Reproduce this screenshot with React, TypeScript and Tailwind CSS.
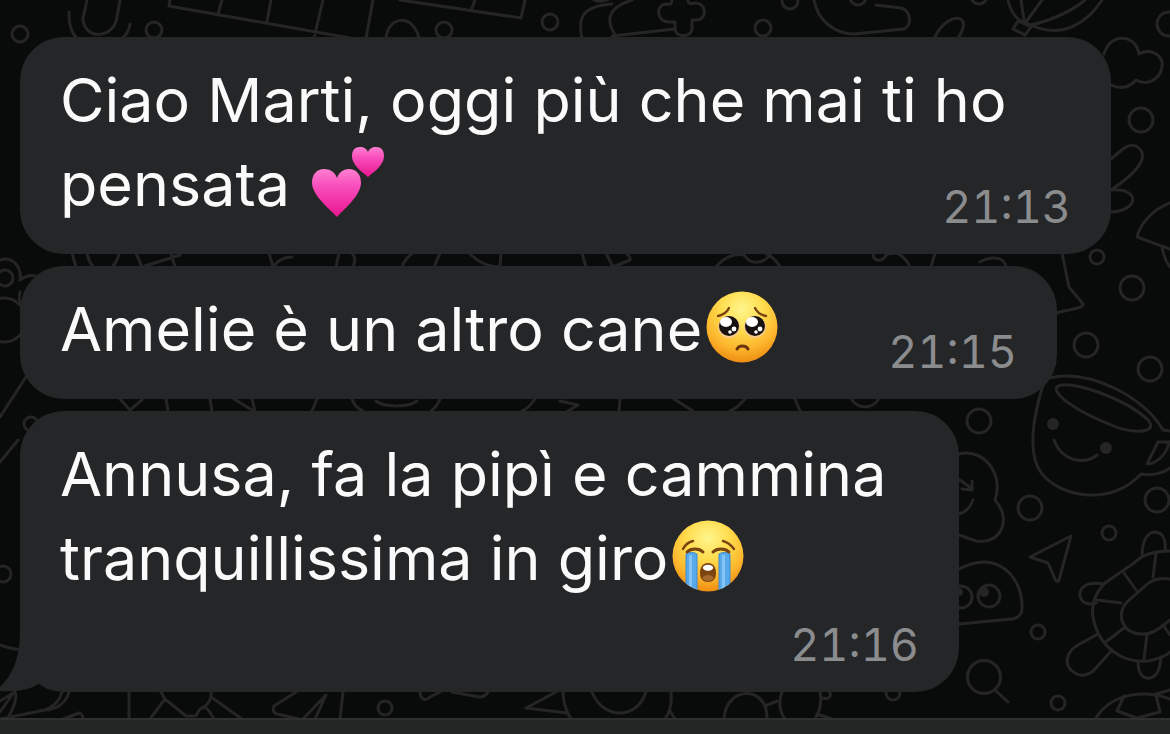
import type { ReactNode } from "react";
import clsx from "clsx";

// ------------------------------------------------------------
// Emoji
// ------------------------------------------------------------

function TwoHearts() {
  return (
    <svg
      role="img"
      aria-label="💕"
      viewBox="0 0 74 72"
      className="inline-block w-[74px] h-[72px] ml-1 align-[-12px]"
    >
      <defs>
        <linearGradient id="heart" x1="0" y1="0" x2="0" y2="1">
          <stop offset="0" stopColor="#ff7fd0" />
          <stop offset="0.35" stopColor="#f94fbd" />
          <stop offset="1" stopColor="#e8168f" />
        </linearGradient>
      </defs>
      <path
        fill="url(#heart)"
        d="M26 71C22 66 1 50 1 37C1 28 6 23 13 23C19 23 24 26 26 32C28 26 33 23 38 23C45 23 50 28 50 37C50 50 30 66 26 71Z"
      />
      <path
        fill="url(#heart)"
        d="M57 31C54 28 41 20 41 10C41 4 44 1 49 1C53 1 56 3 57 6C58 3 61 1 65 1C70 1 73 4 73 10C73 20 60 28 57 31Z"
      />
    </svg>
  );
}

function FaceGradient({ id }: { id: string }) {
  return (
    <defs>
      <radialGradient id={id} cx="0.5" cy="0.25" r="0.75">
        <stop offset="0" stopColor="#fff68e" />
        <stop offset="0.4" stopColor="#ffdc4e" />
        <stop offset="0.75" stopColor="#fcb52c" />
        <stop offset="1" stopColor="#ee8d12" />
      </radialGradient>
    </defs>
  );
}

function PleadingFace() {
  return (
    <svg
      role="img"
      aria-label="🥺"
      viewBox="0 0 72 72"
      className="inline-block w-[72px] h-[72px] ml-1 align-[-12px]"
    >
      <FaceGradient id="pleading" />
      <circle cx="36" cy="36" r="35.5" fill="url(#pleading)" />
      <g fill="none" stroke="#7a4310" strokeWidth="2.4" strokeLinecap="round">
        <path d="M12 25C17 24 21 21 23 17" />
        <path d="M49 17C51 21 55 24 60 25" />
      </g>
      <circle cx="23" cy="36" r="11" fill="#f7c98a" />
      <circle cx="49" cy="36" r="11" fill="#f7c98a" />
      <circle cx="23" cy="35" r="10" fill="#17110f" />
      <circle cx="49" cy="35" r="10" fill="#17110f" />
      <g fill="#fff">
        <ellipse cx="20" cy="31" rx="6" ry="5" />
        <ellipse cx="46" cy="31" rx="6" ry="5" />
        <circle cx="28" cy="38" r="2.4" />
        <circle cx="54" cy="38" r="2.4" />
        <circle cx="24" cy="41" r="1.8" />
        <circle cx="50" cy="41" r="1.8" />
      </g>
      <path
        d="M31 58C33 54 40 54 42 58"
        fill="none"
        stroke="#6b340c"
        strokeWidth="3"
        strokeLinecap="round"
      />
    </svg>
  );
}

function CryingFace() {
  return (
    <svg
      role="img"
      aria-label="😭"
      viewBox="0 0 72 72"
      className="inline-block w-[72px] h-[72px] ml-1 align-[-12px]"
    >
      <FaceGradient id="crying" />
      <clipPath id="face">
        <circle cx="36" cy="36" r="35.5" />
      </clipPath>
      <circle cx="36" cy="36" r="35.5" fill="url(#crying)" />
      <g clipPath="url(#face)">
        <path fill="#58a9ea" stroke="#3c8bd0" d="M14 34C17 32 22 32 25 34V72H14Z" />
        <path fill="#58a9ea" stroke="#3c8bd0" d="M47 34C50 32 55 32 58 34V72H47Z" />
        <path fill="#82c5f5" d="M17 35H20V72H17ZM50 35H53V72H50Z" />
      </g>
      <g fill="none" stroke="#7a4310" strokeLinecap="round">
        <path strokeWidth="2.4" d="M11 29C13 25 17 22 21 21M51 21C55 22 59 25 62 29" />
        <path strokeWidth="3" d="M15 32C19 28 27 28 31 32M41 32C45 28 53 28 57 32" />
      </g>
      <path
        fill="#7c450f"
        d="M36 43C41 43 44 47 44 53C44 59 41 62 36 62C31 62 28 59 28 53C28 47 31 43 36 43Z"
      />
      <path fill="#fff" d="M31 47C33 44 39 44 41 47C42 52 30 52 31 47Z" />
      <path fill="#a86a2c" d="M30 58C33 54 39 54 42 58C39 62 33 62 30 58Z" />
    </svg>
  );
}

// ------------------------------------------------------------
// Chat wallpaper
// ------------------------------------------------------------

const dots = [
  [20, 34, 8], [154, 30, 8], [444, 30, 8], [550, 22, 8], [763, 28, 8],
  [790, 1, 8], [858, -3, 8], [979, -4, 8], [1169, 24, 12], [1141, 120, 12],
  [1097, 257, 7], [1132, 288, 12], [1086, 345, 12], [1150, 369, 12],
  [979, 421, 12], [1030, 508, 12], [1157, 500, 12], [1109, 533, 7],
  [1038, 632, 7], [1058, 703, 7], [385, 708, 7], [31, 424, 7],
  [5, 278, 8], [4, 320, 22], [3, 574, 8], [893, 693, 7],
];

function Wallpaper() {
  return (
    <svg
      aria-hidden="true"
      viewBox="0 0 1170 734"
      preserveAspectRatio="xMinYMin slice"
      className="absolute inset-0 w-full h-full"
    >
      <g
        fill="none"
        stroke="#252525"
        strokeWidth="3"
        strokeLinecap="round"
        strokeLinejoin="round"
      >
        {dots.map(([cx, cy, r]) => (
          <circle key={`${cx}-${cy}`} cx={cx} cy={cy} r={r} />
        ))}
        {/* top row */}
        <path d="M87 0L83 18C83 40 114 40 117 17L120 0M69 12C69 23 70 31 78 40M130 24C129 31 126 36 120 40" />
        <path d="M170 0L169 6L350 38M222 0L218 14M271 0L267 21M323 0L314 38M373 0L366 38M400 0L521 18L525 0M475 0L472 8" />
        <path d="M386 38C388 16 413 13 419 38" />
        <path d="M582 38C578 20 580 6 612 4M616 36C606 22 606 8 632 0M612 36L675 29M594 0C599 2 605 1 609 -1" />
        <path d="M672 0C672 4 670 5 667 4C655 4 656 22 669 22H675V29C676 38 691 38 692 29V20H697C708 19 706 2 695 3C690 4 688 4 688 0" />
        <path d="M814 0C818 22 836 34 854 34L904 29C913 24 910 10 901 8L876 5M935 37C942 22 955 15 962 20C966 25 962 32 958 38" />
        <path d="M1008 0C1010 10 1016 18 1022 22L1031 25C1062 40 1088 22 1102 0M1021 0L1024 20M1042 0L1026 22M1085 0C1070 13 1045 22 1031 25M1018 21L1031 27L1025 35L1013 29Z" />
        {/* right side, upper */}
        <path d="M1104 54C1110 32 1136 34 1139 54C1151 47 1164 56 1162 67C1160 80 1147 86 1136 80C1129 88 1120 89 1111 85" />
        <path d="M1111 159L1123 149C1134 140 1147 150 1141 162C1136 172 1123 182 1111 190M1111 190C1142 188 1138 211 1111 212" />
        <path d="M1170 203C1152 210 1140 224 1137 237L1170 249M1162 246C1163 254 1166 262 1170 267" />
        <path d="M1062 253L1069 287L1083 304C1084 309 1064 310 1057 313" />
        {/* between the bubbles */}
        <path d="M72 253L76 267M87 253C88 260 91 264 93 267M119 253C118 260 115 264 112 267M136 253L142 267M145 266L180 255M171 253L175 267M269 253L273 267C278 260 284 257 292 257" />
        <path d="M339 253L336 267M352 253C356 258 355 262 353 267M413 253C407 257 404 261 402 267M440 253L434 267M470 254C480 264 490 267 500 267M501 253L500 267M582 253L586 267M606 253L613 267L630 260C631 257 628 255 626 253" />
        <path d="M716 267C724 257 735 253 744 255C752 267 765 262 770 255M765 253C773 257 777 261 780 267M873 253C873 262 882 263 887 254L897 253C904 257 908 262 910 267M935 253L931 267M980 262C987 258 1004 254 1006 267" />
        <path d="M120 399L130 410L142 400M166 399L168 411M210 399L212 411M234 399L252 410M252 399L255 411M317 399L312 411M352 399C354 405 358 409 363 411M376 401C385 408 410 407 417 401M440 399C438 404 435 408 431 411M535 399C531 405 527 409 522 411M560 401L578 405L568 411M620 399L619 411M674 399L693 411M745 399C740 405 735 409 730 411M795 399L800 411M852 400C858 409 872 409 878 400" />
        <path d="M0 260C12 256 22 266 20 280C26 276 32 274 38 277M26 377L0 417M20 292C18 300 20 304 24 308" />
        {/* cup */}
        <path d="M1049 378C1090 368 1145 398 1163 430L1170 431M1044 382C1032 420 1027 455 1042 474C1062 498 1112 506 1141 474C1152 476 1164 473 1170 468M1170 442H1158L1147 464C1156 464 1166 455 1169 443" />
        <path d="M1057 387C1066 378 1126 398 1149 421C1158 434 1130 434 1109 424C1078 412 1052 394 1057 387ZM1054 440C1061 460 1083 466 1097 455" />
        {/* cloud and ghost */}
        <path d="M959 454C984 448 1004 474 995 500C1013 520 1000 545 976 541L959 535M960 480L971 488M972 481V490L962 489M973 500C970 508 964 513 958 514" />
        <path d="M959 569C1000 548 1023 580 1022 608C1022 615 1018 618 1012 619L959 624" />
        <circle cx="989" cy="596" r="11" />
        <circle cx="961" cy="597" r="11" />
        {/* paper plane and lens */}
        <path d="M1030 557L1071 536L1059 580C1058 582 1056 582 1055 579L1048 563Z" />
        <circle cx="984" cy="677" r="16.5" />
        <path d="M995 690L1008 702" />
        {/* turtle */}
        <path d="M1170 551C1152 551 1142 555 1134 563L1105 583C1090 598 1090 616 1098 633C1109 655 1130 663 1148 661C1158 659 1166 656 1170 652" />
        <path d="M1170 579C1156 577 1149 582 1145 586L1127 602C1115 615 1123 635 1143 634C1153 634 1160 628 1170 620M1156 553L1153 577M1124 573L1136 590M1097 600L1121 603M1107 641L1124 628M1147 634L1144 659M1163 625L1170 635" />
        <path d="M1142 556C1142 540 1148 532 1155 532C1164 533 1166 540 1165 551M1103 584C1087 581 1079 587 1080 596C1082 604 1089 605 1096 603M1098 634L1078 645C1067 651 1064 663 1071 670C1080 679 1090 675 1096 668L1112 650M1138 661C1138 674 1143 679 1150 678C1158 676 1160 668 1161 657" />
        <path d="M1096 718C1112 692 1146 690 1170 699M1124 696L1117 711L1137 718L1160 712L1156 695M1170 690L1156 694" />
        {/* bottom row */}
        <path d="M0 701L15 692C18 699 12 710 8 718M0 712L12 695M0 719L45 710C55 706 60 700 62 692M48 710C60 708 67 700 69 692M63 719L79 713C83 714 83 717 83 719M129 692V719M161 692L165 699L186 716H196C202 702 207 706 214 719M165 699L150 719M211 692C212 700 208 704 203 708M211 697L242 719M296 692L274 706C272 711 274 713 277 714L299 719M303 719L326 695L315 719M343 692L340 719" />
        <path d="M420 692C421 701 426 701 430 697L440 692M452 692L474 696C481 698 486 696 488 692M556 692L526 708L567 713M563 692C563 702 566 711 571 719M592 692C603 720 637 720 646 692M671 692C672 702 671 711 665 719M670 711L675 719M724 719C726 685 768 685 767 719M765 706L777 701M782 692C778 702 780 713 785 719M820 692C822 703 820 711 815 719M822 698C830 700 832 695 829 692M817 714L832 719" />
        <path d="M0 462L18 440M0 645C8 648 14 650 20 649" />
      </g>
      <g fill="#252525">
        <circle cx="1053" cy="424" r="6" />
        <circle cx="1106" cy="448" r="6" />
        <circle cx="984" cy="592" r="5" />
        <circle cx="959" cy="592" r="4" />
      </g>
    </svg>
  );
}

// ------------------------------------------------------------
// Messages
// ------------------------------------------------------------

type BubbleProps = {
  time: string;
  className: string;
  timeBelow?: boolean;
  tail?: boolean;
  children: ReactNode;
};

function Bubble({ time, className, timeBelow, tail, children }: BubbleProps) {
  return (
    <li
      className={clsx(
        "relative w-full px-10 pt-[21px] pb-[19px] rounded-[44px] bg-[#242628]",
        className
      )}
    >
      {/* the time floats into the last line, or clears it */}
      <p className="flow-root text-[61px] leading-[84px] text-[#fafafa]">
        {children}
        {timeBelow && <br />}
        <time
          className={clsx(
            "float-right text-[45px] leading-[56px] tabular-nums text-[#8b8c8e]",
            timeBelow ? "mt-[17px]" : "mt-[37px]"
          )}
        >
          {time}
        </time>
      </p>
      {tail && (
        <svg
          aria-hidden="true"
          viewBox="0 0 40 60"
          className="absolute bottom-0 -left-5 w-10 h-[60px]"
        >
          <path
            fill="#242628"
            d="M20 0C20 26 12 44 0 55V59C16 60 30 58 38 52L40 0Z"
          />
        </svg>
      )}
    </li>
  );
}

export default function App() {
  return (
    <div className="relative flex flex-col min-h-screen overflow-hidden bg-[#090a0a] font-['Inter','Liberation_Sans',sans-serif]">
      <Wallpaper />

      <main className="relative flex-1 px-5 pt-[37px] pb-[26px]">
        <ul className="flex flex-col gap-3">
          <Bubble time="21:13" className="max-w-[1091px]">
            Ciao Marti, oggi più che mai ti ho pensata <TwoHearts />
          </Bubble>
          <Bubble time="21:15" className="max-w-[1037px]">
            Amelie è un altro cane
            <PleadingFace />
          </Bubble>
          <Bubble time="21:16" className="max-w-[939px]" timeBelow tail>
            Annusa, fa la pipì e cammina tranquillissima in giro
            <CryingFace />
          </Bubble>
        </ul>
      </main>

      <footer className="relative h-4 border-t-2 border-[#2e2f2f] bg-[#242625]" />
    </div>
  );
}
